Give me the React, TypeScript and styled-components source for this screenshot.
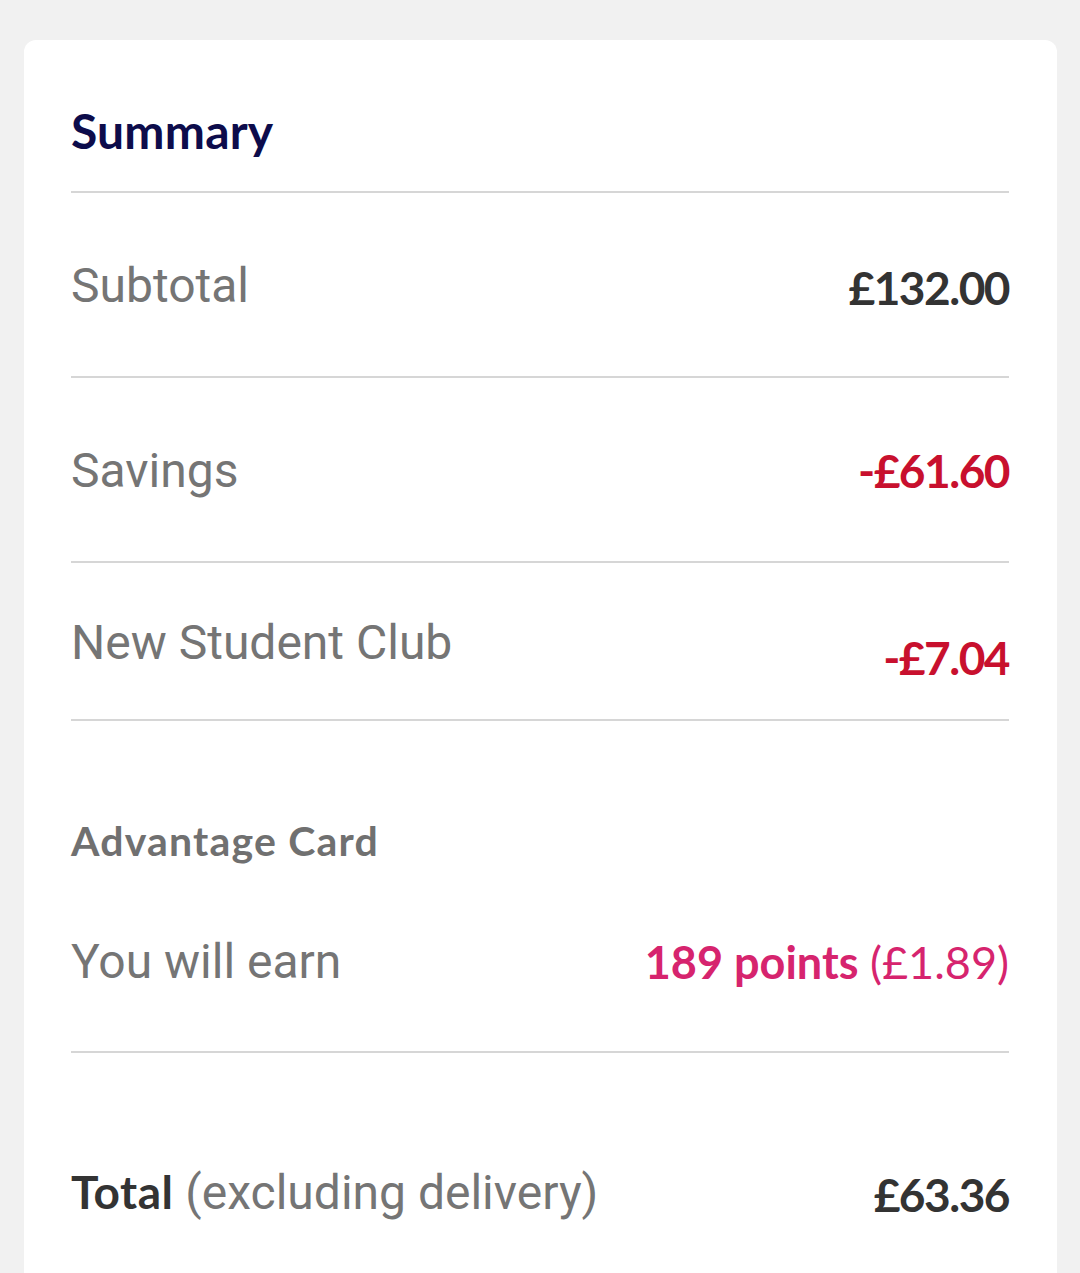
import React from 'react'
import styled, { createGlobalStyle } from 'styled-components'

const GlobalStyle = createGlobalStyle`
  html, body {
    margin: 0;
    padding: 0;
    background: #f1f1f1;
  }
  body {
    font-family: Roboto, 'Liberation Sans', sans-serif;
    -webkit-font-smoothing: antialiased;
  }
`

const BRAND = "Lato, 'Open Sans', sans-serif"

const Page = styled.div`
  padding: 40px 23px 0 24px;
  min-height: 1273px;
  box-sizing: border-box;
`

const Card = styled.section`
  background: #ffffff;
  border-radius: 12px 12px 0 0;
  padding: 0 48px 60px 47px;
  min-height: 1233px;
  box-sizing: border-box;
`

const Header = styled.header`
  padding: 60px 0 29px;
  border-bottom: 2px solid #d6d6d6;
`

const Title = styled.h2`
  margin: 0;
  font-family: ${BRAND};
  font-weight: 700;
  font-size: 48px;
  line-height: 62px;
  letter-spacing: 0.2px;
  color: #0d0c4b;
`

const Row = styled.div<{ $top: number; $bottom: number; $divider?: boolean }>`
  display: flex;
  justify-content: space-between;
  align-items: flex-start;
  padding: ${p => p.$top}px 0 ${p => p.$bottom}px;
  border-bottom: ${p => (p.$divider ? '2px solid #d6d6d6' : 'none')};
`

const Label = styled.span`
  font-size: 48px;
  line-height: 56px;
  color: #757575;
`

const Strong = styled.span`
  font-family: ${BRAND};
  font-weight: 700;
  font-size: 46px;
  letter-spacing: 0.5px;
  color: #333333;
`

type Tone = 'dark' | 'red' | 'pink'

const toneColor: Record<Tone, string> = {
  dark: '#333333',
  red: '#c8102e',
  pink: '#d6246e',
}

/* $drop pushes the figure down without making the row taller */
const Value = styled.span<{ $tone: Tone; $drop?: number }>`
  font-family: ${BRAND};
  font-weight: 700;
  font-size: 46px;
  line-height: 56px;
  letter-spacing: -1.5px;
  padding-top: ${p => p.$drop ?? 0}px;
  margin-bottom: -${p => p.$drop ?? 0}px;
  color: ${p => toneColor[p.$tone]};
`

const Points = styled.span`
  font-family: ${BRAND};
  font-size: 45px;
  line-height: 56px;
  color: #d6246e;

  b {
    font-weight: 700;
  }
`

const Section = styled.div`
  padding-top: 96px;
  border-bottom: 2px solid #d6d6d6;
`

const SectionTitle = styled.h3`
  margin: 0;
  font-family: ${BRAND};
  font-weight: 700;
  font-size: 41px;
  line-height: 48px;
  letter-spacing: 1.2px;
  color: #707070;
`

export default function App() {
  return (
    <>
      <GlobalStyle />
      <Page>
        <Card>
          <Header>
            <Title>Summary</Title>
          </Header>

          <Row $top={65} $bottom={62} $divider>
            <Label>Subtotal</Label>
            <Value $tone="dark" $drop={2}>£132.00</Value>
          </Row>

          <Row $top={65} $bottom={62} $divider>
            <Label>Savings</Label>
            <Value $tone="red">-£61.60</Value>
          </Row>

          <Row $top={52} $bottom={48} $divider>
            <Label>New Student Club</Label>
            <Value $tone="red" $drop={15}>-£7.04</Value>
          </Row>

          <Section>
            <SectionTitle>Advantage Card</SectionTitle>
            <Row $top={69} $bottom={61}>
              <Label>You will earn</Label>
              <Points>
                <b>189 points</b> (£1.89)
              </Points>
            </Row>
          </Section>

          <Row $top={111} $bottom={40}>
            <Label>
              <Strong>Total</Strong> (excluding delivery)
            </Label>
            <Value $tone="dark" $drop={3}>£63.36</Value>
          </Row>
        </Card>
      </Page>
    </>
  )
}
